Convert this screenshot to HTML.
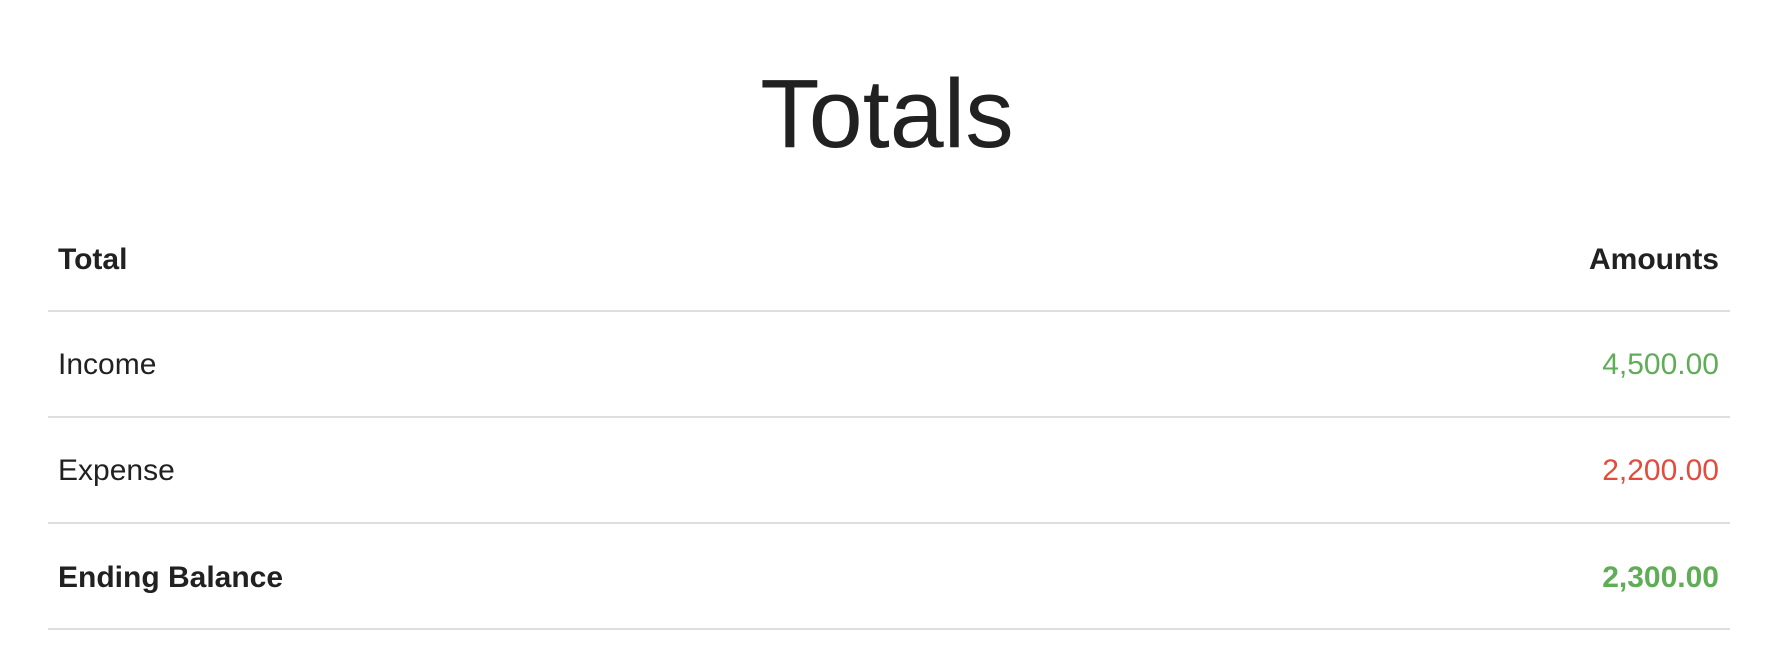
<!DOCTYPE html>
<html><head><meta charset="utf-8"><style>
html,body{margin:0;padding:0;background:#fff;width:1774px;height:656px;overflow:hidden;font-family:"Liberation Sans",Arial,sans-serif;color:#212121}
.a{position:absolute;line-height:1;white-space:nowrap}
.l{position:absolute;left:48px;width:1682px;height:2px;background:#dedede}
.r{right:55px;text-align:right}
.g{color:#5fad56}.red{color:#e24c3c}
</style></head><body>
<div class="a" style="left:0;width:1774px;text-align:center;top:65px;font-size:97px;">Totals</div>
<div class="a" style="left:58px;top:245px;font-size:30px;font-weight:bold">Total</div>
<div class="a r" style="top:245px;font-size:30px;font-weight:bold">Amounts</div>
<div class="l" style="top:310px"></div>
<div class="a" style="left:58px;top:350px;font-size:30px">Income</div>
<div class="a r g" style="top:350px;font-size:30px">4,500.00</div>
<div class="l" style="top:416px"></div>
<div class="a" style="left:58px;top:456px;font-size:30px">Expense</div>
<div class="a r red" style="top:456px;font-size:30px">2,200.00</div>
<div class="l" style="top:522px"></div>
<div class="a" style="left:58px;top:563px;font-size:30px;font-weight:bold">Ending Balance</div>
<div class="a r g" style="top:563px;font-size:30px;font-weight:bold">2,300.00</div>
<div class="l" style="top:628px"></div>
</body></html>
